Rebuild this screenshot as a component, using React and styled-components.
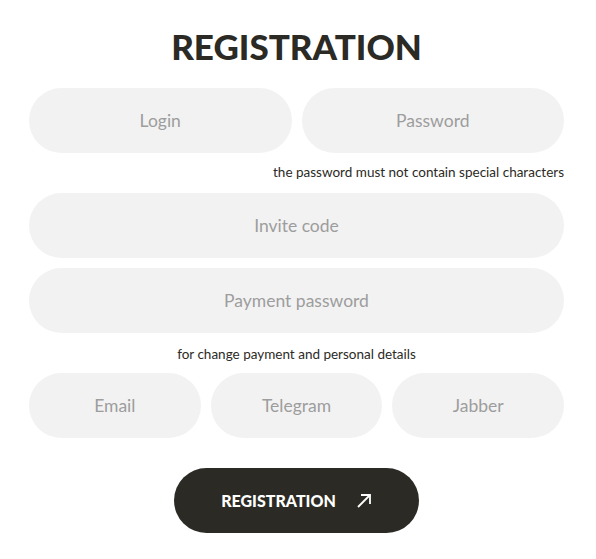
import React from "react";
import styled, { createGlobalStyle } from "styled-components";

const GlobalStyle = createGlobalStyle`
  body {
    margin: 0;
    background: #ffffff;
    font-family: "Lato", "Noto Sans", sans-serif;
  }
`;

const Page = styled.div`
  width: 535px;
  padding: 28px 32px 20px 29px;
  display: flex;
  flex-direction: column;
`;

const Title = styled.h1`
  margin: 0 0 24px;
  text-align: center;
  font-size: 35px;
  line-height: 36px;
  font-weight: 900;
  color: #2b2a25;
`;

const Row = styled.div`
  display: grid;
  grid-template-columns: repeat(${(p) => p.cols || 1}, 1fr);
  gap: 10px;
  margin-bottom: ${(p) => p.spacing || 10}px;
`;

const Field = styled.input`
  box-sizing: border-box;
  width: 100%;
  height: 65px;
  border: none;
  outline: none;
  border-radius: 33px;
  background: #f2f2f2;
  text-align: center;
  font-family: "Lato", "Noto Sans", sans-serif;
  font-size: 17.5px;
  color: #333;

  &::placeholder {
    color: #9d9d9d;
  }
`;

const Note = styled.div`
  font-size: 13.5px;
  line-height: 18px;
  color: #2b2a25;
  text-align: ${(p) => p.align || "center"};
  margin: 0 0 ${(p) => p.spacing || 10}px;
`;

const Submit = styled.button`
  align-self: center;
  margin-top: 20px;
  width: 245px;
  height: 65px;
  border: none;
  border-radius: 33px;
  background: #2c2a24;
  color: #ffffff;
  display: flex;
  align-items: center;
  justify-content: center;
  gap: 20px;
  font-family: "Lato", "Noto Sans", sans-serif;
  font-size: 16px;
  font-weight: 900;
  cursor: pointer;
`;

const Arrow = () => (
  <svg width="16" height="16" viewBox="0 0 16 16" fill="none" stroke="#fff" strokeWidth="1.8">
    <path d="M2 14 L14 2" />
    <path d="M5 2 H14 V11" />
  </svg>
);

export default function App() {
  return (
    <>
      <GlobalStyle />
      <Page>
        <Title>REGISTRATION</Title>
        <Row cols={2} spacing={10}>
          <Field placeholder="Login" />
          <Field type="password" placeholder="Password" />
        </Row>
        <Note align="right" spacing={12}>
          the password must not contain special characters
        </Note>
        <Row spacing={10}>
          <Field placeholder="Invite code" />
        </Row>
        <Row spacing={12}>
          <Field type="password" placeholder="Payment password" />
        </Row>
        <Note spacing={10}>for change payment and personal details</Note>
        <Row cols={3} spacing={10}>
          <Field placeholder="Email" />
          <Field placeholder="Telegram" />
          <Field placeholder="Jabber" />
        </Row>
        <Submit>
          REGISTRATION
          <Arrow />
        </Submit>
      </Page>
    </>
  );
}
